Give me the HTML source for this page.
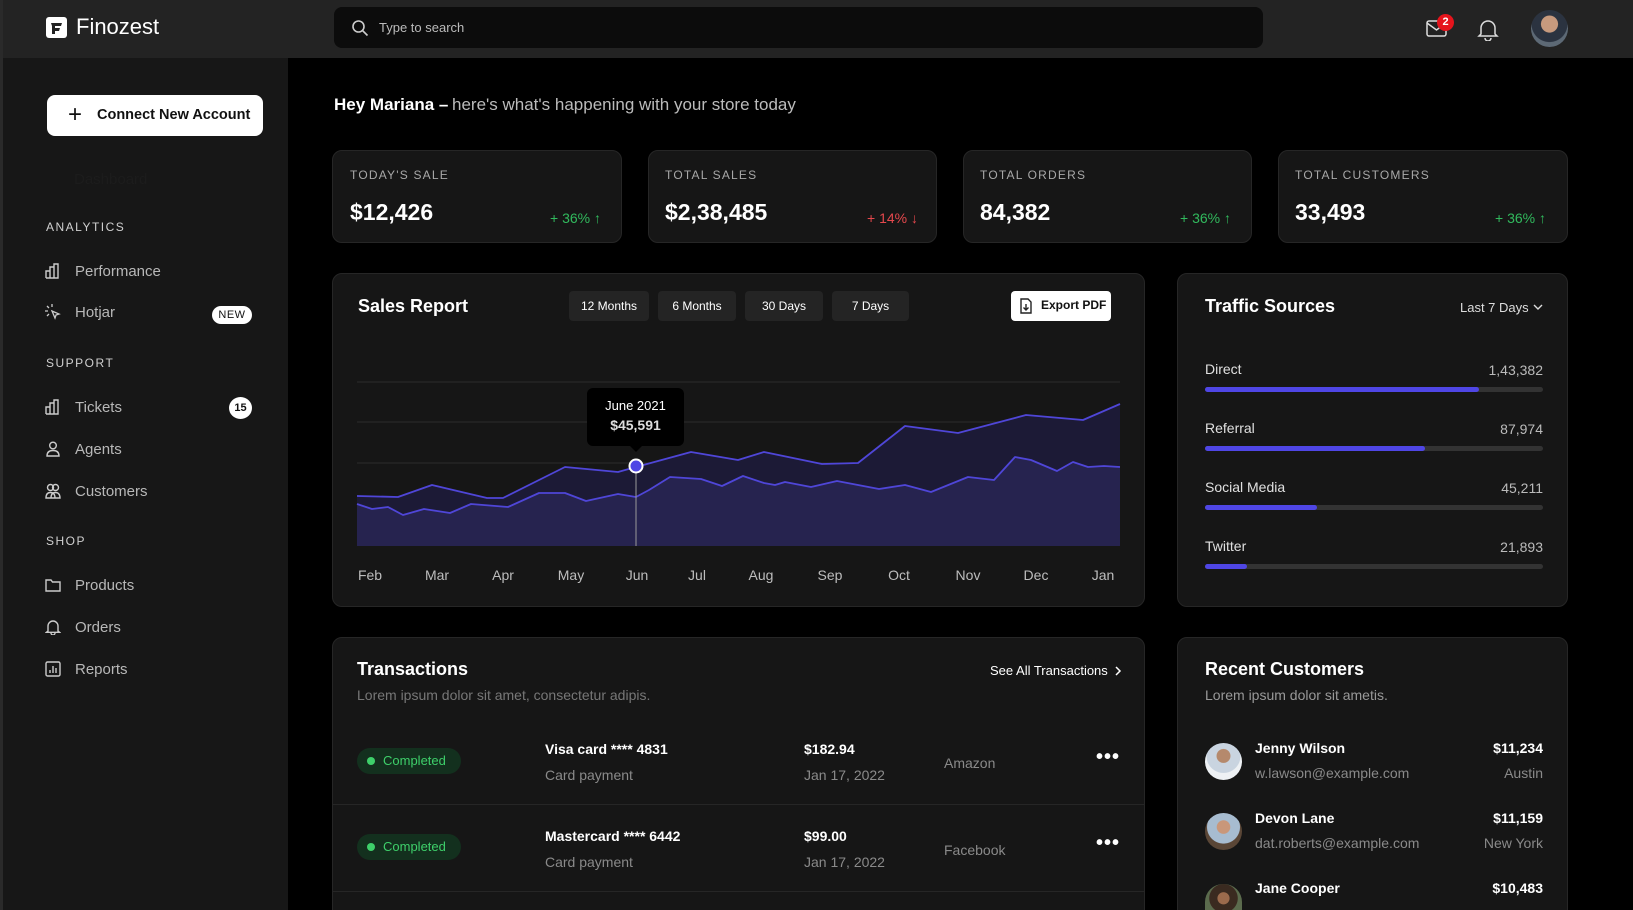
<!DOCTYPE html>
<html style="overflow:hidden;height:910px"><head><meta charset="utf-8"><style>
*{margin:0;padding:0;box-sizing:border-box}
body{width:1633px;height:910px;background:#000;font-family:"Liberation Sans",sans-serif;color:#fff;position:relative;overflow:hidden}
.a{position:absolute;white-space:nowrap}
.card{position:absolute;background:#161616;border:1px solid #262626;border-radius:10px}
.lbl{font-size:12px;letter-spacing:1.2px;color:#a8a8a8}
.val{font-size:23px;font-weight:bold}
.pct{font-size:14px;color:#31b95d}
.sec{font-size:12px;letter-spacing:1.5px;color:#d0d0d0}
.nav{font-size:15px;color:#b8b8b8}
.tab{position:absolute;top:291px;height:30px;background:#242424;border-radius:4px;font-size:12px;line-height:30px;text-align:center}
.mo{font-size:14px;color:#bdbdbd;transform:translateX(-50%)}
.ts{font-size:14px;color:#e0e0e0}
.tv{font-size:14px;color:#bbb;text-align:right}
.trk{position:absolute;left:1205px;width:338px;height:5px;border-radius:3px;background:#333}
.trk i{display:block;height:5px;border-radius:3px;background:#4f46e5}
.pill{position:absolute;left:357px;width:104px;height:26px;border-radius:13px;background:#13301e;color:#3ecf6a;font-size:13px;line-height:26px;padding-left:26px}
.pill:before{content:"";position:absolute;left:10px;top:9px;width:8px;height:8px;border-radius:50%;background:#3ecf6a}
.t1{font-size:14px;font-weight:bold}
.t2{font-size:14px;color:#8a8a8a}
.dots{font-size:20px;font-weight:bold;letter-spacing:1px}
</style></head><body>
<div class="a" style="left:0;top:0;width:1633px;height:58px;background:#232323"></div>
<div class="a" style="left:0;top:0;width:3px;height:910px;background:#2a2a2a"></div>
<div class="a" style="left:3px;top:58px;width:285px;height:852px;background:#171717"></div>
<div class="a" style="left:46px;top:17px;width:21px;height:21px;background:#fff;border-radius:3px"></div>
<svg class="a" style="left:46px;top:17px" width="21" height="21"><path d="M5 6h11l-1 3H9v2h5l-1 3H9v3H6V9" fill="#232323"/></svg>
<div class="a" style="left:76px;top:14px;font-size:22px">Finozest</div>
<div class="a" style="left:334px;top:7px;width:929px;height:41px;background:#0c0c0c;border-radius:8px"></div>
<svg class="a" style="left:351px;top:19px" width="18" height="18" fill="none" stroke="#ccc" stroke-width="1.6"><circle cx="7.5" cy="7.5" r="5.5"/><path d="M11.5 11.5l5 5"/></svg>
<div class="a" style="left:379px;top:20px;font-size:13px;color:#bbb">Type to search</div>
<svg class="a" style="left:1425px;top:18px" width="26" height="22" fill="none" stroke="#ddd" stroke-width="1.5"><rect x="2" y="3" width="19" height="15" rx="2"/><path d="M2 5l9.5 7L21 5"/></svg>
<div class="a" style="left:1437px;top:14px;width:17px;height:17px;border-radius:50%;background:#e5141c;font-size:11px;font-weight:bold;text-align:center;line-height:17px">2</div>
<svg class="a" style="left:1477px;top:17px" width="22" height="24" fill="none" stroke="#ddd" stroke-width="1.5"><path d="M4 17V11a7 7 0 0114 0v6l2 2H2z"/><path d="M8 21a3 3 0 006 0"/></svg>
<div class="a" style="left:1531px;top:10px;width:37px;height:37px;border-radius:50%;background:radial-gradient(circle at 50% 38%,#c79a7e 0 28%,#2b3340 30% 60%,#5d6975 62%)"></div>
<div class="a" style="left:47px;top:95px;width:216px;height:41px;background:#fff;border-radius:8px"></div>
<div class="a" style="left:68px;top:101px;font-size:24px;color:#111;font-weight:300">+</div>
<div class="a" style="left:97px;top:107px;font-size:14.5px;font-weight:bold;color:#111">Connect New Account</div>
<div class="a" style="left:74px;top:171px;font-size:15px;color:#1c1c1c">Dashboard</div>
<div class="a sec" style="left:46px;top:220px">ANALYTICS</div>
<svg class="a" style="left:45px;top:263px" width="16" height="16" fill="none" stroke="#ccc" stroke-width="1.4"><path d="M1 15V8h4v7M5 15V4h4v11M9 15V1h4v14H1"/></svg>
<div class="a nav" style="left:75px;top:263px">Performance</div>
<svg class="a" style="left:45px;top:304px" width="16" height="16" fill="none" stroke="#ccc" stroke-width="1.3"><path d="M7 7l7 3-3 1-1 3z M2 2l2 2M7 0v3M0 7h3M4 10l-2 2"/></svg>
<div class="a nav" style="left:75px;top:304px">Hotjar</div>
<div class="a" style="left:212px;top:306px;width:40px;height:18px;border-radius:9px;background:#fff;color:#111;font-size:11px;text-align:center;line-height:18px;letter-spacing:.5px">NEW</div>
<div class="a sec" style="left:46px;top:356px">SUPPORT</div>
<svg class="a" style="left:45px;top:399px" width="16" height="16" fill="none" stroke="#ccc" stroke-width="1.4"><path d="M1 15V8h4v7M5 15V4h4v11M9 15V1h4v14H1"/></svg>
<div class="a nav" style="left:75px;top:399px">Tickets</div>
<div class="a" style="left:229px;top:397px;width:23px;height:22px;border-radius:50%;background:#fff;color:#111;font-size:11px;font-weight:bold;text-align:center;line-height:22px">15</div>
<svg class="a" style="left:45px;top:441px" width="16" height="16" fill="none" stroke="#ccc" stroke-width="1.4"><circle cx="8" cy="4.5" r="3.3"/><path d="M2 15c0-4 2.5-5.5 6-5.5s6 1.5 6 5.5z"/></svg>
<div class="a nav" style="left:75px;top:441px">Agents</div>
<svg class="a" style="left:45px;top:483px" width="16" height="16" fill="none" stroke="#ccc" stroke-width="1.4"><circle cx="5.5" cy="4.5" r="3"/><circle cx="10.5" cy="4.5" r="3"/><path d="M1 15c0-4 2-5.5 4.5-5.5S10 11 10 15zM6 15c0-4 2-5.5 4.5-5.5S15 11 15 15z"/></svg>
<div class="a nav" style="left:75px;top:483px">Customers</div>
<div class="a sec" style="left:46px;top:534px">SHOP</div>
<svg class="a" style="left:45px;top:577px" width="16" height="16" fill="none" stroke="#ccc" stroke-width="1.4"><path d="M1 3h5l1.5 2H15v9H1z"/></svg>
<div class="a nav" style="left:75px;top:577px">Products</div>
<svg class="a" style="left:45px;top:619px" width="16" height="16" fill="none" stroke="#ccc" stroke-width="1.4"><path d="M3 12V7a5 5 0 0110 0v5l1.5 1.3h-13z"/><path d="M6 14a2 2 0 004 0"/></svg>
<div class="a nav" style="left:75px;top:619px">Orders</div>
<svg class="a" style="left:45px;top:661px" width="16" height="16" fill="none" stroke="#ccc" stroke-width="1.4"><rect x="1" y="1" width="14" height="14" rx="1.5"/><path d="M5 12V9M8 12V5M11 12V7"/></svg>
<div class="a nav" style="left:75px;top:661px">Reports</div>
<div class="a" style="left:334px;top:95px;font-size:17px;font-weight:bold">Hey Mariana –</div>
<div class="a" style="left:452px;top:95px;font-size:17px;color:#bbb">here's what's happening with your store today</div>
<div class="card" style="left:332px;top:150px;width:290px;height:93px"></div>
<div class="card" style="left:648px;top:150px;width:289px;height:93px"></div>
<div class="card" style="left:963px;top:150px;width:289px;height:93px"></div>
<div class="card" style="left:1278px;top:150px;width:290px;height:93px"></div>
<div class="a lbl" style="left:350px;top:168px">TODAY'S SALE</div>
<div class="a val" style="left:350px;top:199px">$12,426</div>
<div class="a pct" style="left:550px;top:210px">+ 36% ↑</div>
<div class="a lbl" style="left:665px;top:168px">TOTAL SALES</div>
<div class="a val" style="left:665px;top:199px">$2,38,485</div>
<div class="a pct" style="left:867px;top:210px;color:#e5484d">+ 14% ↓</div>
<div class="a lbl" style="left:980px;top:168px">TOTAL ORDERS</div>
<div class="a val" style="left:980px;top:199px">84,382</div>
<div class="a pct" style="left:1180px;top:210px">+ 36% ↑</div>
<div class="a lbl" style="left:1295px;top:168px">TOTAL CUSTOMERS</div>
<div class="a val" style="left:1295px;top:199px">33,493</div>
<div class="a pct" style="left:1495px;top:210px">+ 36% ↑</div>
<div class="card" style="left:332px;top:273px;width:813px;height:334px"></div>
<div class="a" style="left:358px;top:296px;font-size:18px;font-weight:bold">Sales Report</div>
<div class="tab" style="left:569px;width:80px">12 Months</div>
<div class="tab" style="left:658px;width:78px">6 Months</div>
<div class="tab" style="left:745px;width:78px">30 Days</div>
<div class="tab" style="left:832px;width:77px">7 Days</div>
<div class="a" style="left:1011px;top:291px;width:100px;height:30px;background:#fff;border-radius:4px"></div>
<svg class="a" style="left:1019px;top:298px" width="14" height="16" fill="none" stroke="#222" stroke-width="1.4"><path d="M2 1h7l3 3v11H2z"/><path d="M7 6v6M4.5 9.5L7 12l2.5-2.5"/></svg>
<div class="a" style="left:1041px;top:298px;font-size:12px;color:#111;font-weight:bold">Export PDF</div>
<svg class="a" style="left:0;top:0" width="1633" height="910">
<g stroke="#2c2c2c" stroke-width="1"><path d="M357 382H1120M357 422H1120M357 463H1120M357 504H1120"/></g>
<path d="M357 496L398 497L432 485L487 498L503 498L565 467L618 472L636 467L691 452L738 460L764 452L822 464L858 463L905 426L958 433L1026 415L1083 420L1120 404V546H357Z" fill="#1c1a36"/>
<path d="M357 504L372 509L388 507L403 515L424 509L450 513L471 504L508 507L539 493L565 493L586 501L618 494L636 497L649 490L670 477L701 479L722 486L743 476L764 483L775 485L785 482L811 487L837 481L879 489L905 485L931 492L968 477L994 480L1015 457L1031 460L1057 471L1073 462L1088 467L1104 466L1120 467V546H357Z" fill="#26234f"/>
<path d="M357 496L398 497L432 485L487 498L503 498L565 467L618 472L636 467L691 452L738 460L764 452L822 464L858 463L905 426L958 433L1026 415L1083 420L1120 404" fill="none" stroke="#4f46d8" stroke-width="1.8" stroke-linejoin="round"/>
<path d="M357 504L372 509L388 507L403 515L424 509L450 513L471 504L508 507L539 493L565 493L586 501L618 494L636 497L649 490L670 477L701 479L722 486L743 476L764 483L775 485L785 482L811 487L837 481L879 489L905 485L931 492L968 477L994 480L1015 457L1031 460L1057 471L1073 462L1088 467L1104 466L1120 467" fill="none" stroke="#4f46d8" stroke-width="1.8" stroke-linejoin="round"/>
<path d="M636 466V546" stroke="#9a9a9a" stroke-width="1"/>
<rect x="587" y="388" width="97" height="58" rx="6" fill="#000"/>
<path d="M630 446l6 6 6-6z" fill="#000"/>
<circle cx="636" cy="466" r="6.5" fill="#4f46e5" stroke="#fff" stroke-width="2"/>
</svg>
<div class="a" style="left:587px;top:398px;width:97px;text-align:center;font-size:13px">June 2021</div>
<div class="a" style="left:587px;top:417px;width:97px;text-align:center;font-size:14px;font-weight:bold;color:#ddd">$45,591</div>
<div class="a mo" style="left:370px;top:567px">Feb</div>
<div class="a mo" style="left:437px;top:567px">Mar</div>
<div class="a mo" style="left:503px;top:567px">Apr</div>
<div class="a mo" style="left:571px;top:567px">May</div>
<div class="a mo" style="left:637px;top:567px">Jun</div>
<div class="a mo" style="left:697px;top:567px">Jul</div>
<div class="a mo" style="left:761px;top:567px">Aug</div>
<div class="a mo" style="left:830px;top:567px">Sep</div>
<div class="a mo" style="left:899px;top:567px">Oct</div>
<div class="a mo" style="left:968px;top:567px">Nov</div>
<div class="a mo" style="left:1036px;top:567px">Dec</div>
<div class="a mo" style="left:1103px;top:567px">Jan</div>
<div class="card" style="left:1177px;top:273px;width:391px;height:334px"></div>
<div class="a" style="left:1205px;top:296px;font-size:18px;font-weight:bold">Traffic Sources</div>
<div class="a" style="left:1460px;top:300px;font-size:13px;color:#ddd">Last 7 Days</div>
<svg class="a" style="left:1532px;top:302px" width="12" height="10" fill="none" stroke="#ddd" stroke-width="1.4"><path d="M2 3l4 4 4-4"/></svg>
<div class="a ts" style="left:1205px;top:361px">Direct</div><div class="a tv" style="right:90px;top:362px">1,43,382</div>
<div class="trk" style="top:387px"><i style="width:81%"></i></div>
<div class="a ts" style="left:1205px;top:420px">Referral</div><div class="a tv" style="right:90px;top:421px">87,974</div>
<div class="trk" style="top:446px"><i style="width:65%"></i></div>
<div class="a ts" style="left:1205px;top:479px">Social Media</div><div class="a tv" style="right:90px;top:480px">45,211</div>
<div class="trk" style="top:505px"><i style="width:33%"></i></div>
<div class="a ts" style="left:1205px;top:538px">Twitter</div><div class="a tv" style="right:90px;top:539px">21,893</div>
<div class="trk" style="top:564px"><i style="width:12.5%"></i></div>
<div class="card" style="left:332px;top:637px;width:813px;height:283px"></div>
<div class="a" style="left:357px;top:659px;font-size:18px;font-weight:bold">Transactions</div>
<div class="a" style="left:990px;top:663px;font-size:13px">See All Transactions</div>
<svg class="a" style="left:1113px;top:665px" width="10" height="12" fill="none" stroke="#fff" stroke-width="1.5"><path d="M3 2l4 4-4 4"/></svg>
<div class="a" style="left:357px;top:687px;font-size:14px;color:#777">Lorem ipsum dolor sit amet, consectetur adipis.</div>
<div class="pill" style="top:748px">Completed</div>
<div class="a t1" style="left:545px;top:741px">Visa card **** 4831</div>
<div class="a t2" style="left:545px;top:767px">Card payment</div>
<div class="a t1" style="left:804px;top:741px">$182.94</div>
<div class="a t2" style="left:804px;top:767px">Jan 17, 2022</div>
<div class="a t2" style="left:944px;top:755px">Amazon</div>
<div class="a dots" style="left:1096px;top:746px">•••</div>
<div class="a" style="left:333px;top:804px;width:811px;height:1px;background:#262626"></div>
<div class="pill" style="top:834px">Completed</div>
<div class="a t1" style="left:545px;top:828px">Mastercard **** 6442</div>
<div class="a t2" style="left:545px;top:854px">Card payment</div>
<div class="a t1" style="left:804px;top:828px">$99.00</div>
<div class="a t2" style="left:804px;top:854px">Jan 17, 2022</div>
<div class="a t2" style="left:944px;top:842px">Facebook</div>
<div class="a dots" style="left:1096px;top:832px">•••</div>
<div class="a" style="left:333px;top:891px;width:811px;height:1px;background:#262626"></div>
<div class="card" style="left:1177px;top:637px;width:391px;height:283px"></div>
<div class="a" style="left:1205px;top:659px;font-size:18px;font-weight:bold">Recent Customers</div>
<div class="a" style="left:1205px;top:687px;font-size:14px;color:#999">Lorem ipsum dolor sit ametis.</div>
<div class="a" style="left:1205px;top:743px;width:37px;height:37px;border-radius:50%;background:radial-gradient(circle at 50% 35%,#b5896c 0 22%,#c9d4e0 24% 55%,#eef1f4 57%)"></div>
<div class="a t1" style="left:1255px;top:740px">Jenny Wilson</div>
<div class="a t2" style="left:1255px;top:765px">w.lawson@example.com</div>
<div class="a t1" style="right:90px;top:740px">$11,234</div>
<div class="a t2" style="right:90px;top:765px">Austin</div>
<div class="a" style="left:1205px;top:813px;width:37px;height:37px;border-radius:50%;background:radial-gradient(circle at 50% 38%,#c9977a 0 22%,#a7bcd0 24% 55%,#5a4636 57%)"></div>
<div class="a t1" style="left:1255px;top:810px">Devon Lane</div>
<div class="a t2" style="left:1255px;top:835px">dat.roberts@example.com</div>
<div class="a t1" style="right:90px;top:810px">$11,159</div>
<div class="a t2" style="right:90px;top:835px">New York</div>
<div class="a" style="left:1205px;top:884px;width:37px;height:26px;border-radius:18px 18px 0 0;background:radial-gradient(circle at 50% 55%,#9b6a4c 0 25%,#3a2a20 27% 60%,#5b6b4d 62%)"></div>
<div class="a t1" style="left:1255px;top:880px">Jane Cooper</div>
<div class="a t1" style="right:90px;top:880px">$10,483</div>
</body></html>
